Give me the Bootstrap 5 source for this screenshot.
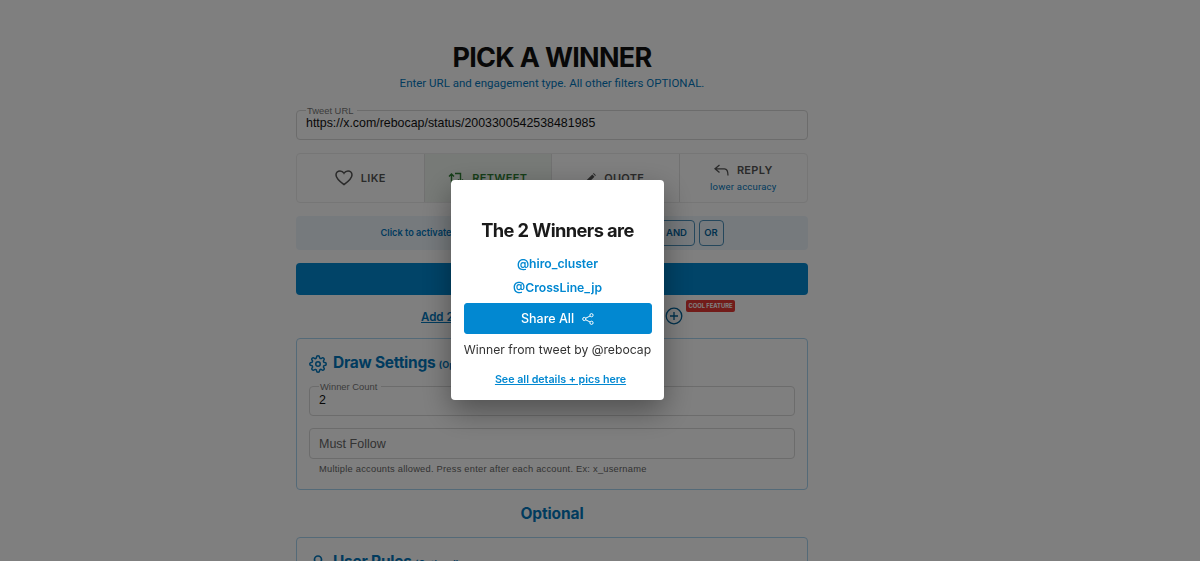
<!DOCTYPE html>
<html lang="en">

<head>
  <meta charset="UTF-8" />
  <meta name="viewport" content="width=device-width, initial-scale=1.0" />
  <title>Pick a Winner</title>
  <link href="https://cdn.jsdelivr.net/npm/bootstrap@5.3.3/dist/css/bootstrap.min.css" rel="stylesheet" />
  <style>
    html, body {
      height: 561px;
      overflow: hidden;
    }

    body {
      background-color: #fff;
      font-family: Inter, sans-serif;
    }

    .page-wrap {
      width: 512px;
      margin-left: 296px;
      padding-top: 42px;
    }

    .page-title {
      font-size: 27px;
      line-height: 32px;
      font-weight: 700;
      letter-spacing: -0.7px;
      color: #111;
      margin: 0;
    }

    .page-sub {
      font-family: Roboto, sans-serif;
      font-size: 11.5px;
      line-height: 14px;
      color: #0277bd;
      margin: 2px 0 20px;
    }

    .out-field {
      border: 1px solid #d8d8d8;
      border-radius: 4px;
      padding: 0 9px;
      height: 30px;
      position: relative;
    }

    .out-field legend {
      float: none;
      width: auto;
      font-family: "Liberation Sans", sans-serif;
      font-size: 9.4px;
      line-height: 1px;
      height: 1px;
      color: #777;
      padding: 0 4px 0 1px;
      margin: 0;
    }

    .out-field input {
      display: block;
      width: 100%;
      border: 0;
      outline: 0;
      padding: 0;
      background: transparent;
      font-family: "Liberation Sans", sans-serif;
      font-size: 12.4px;
      line-height: 25px;
      height: 25px;
      color: #111;
    }

    .out-count input {
      height: 27px;
      line-height: 27px;
    }

    .out-plain {
      display: block;
      width: 100%;
      height: 31px;
      border: 1px solid #d8d8d8;
      border-radius: 4px;
      padding: 0 9px;
      font-family: "Liberation Sans", sans-serif;
      font-size: 12.5px;
      color: #111;
      outline: 0;
    }

    .out-plain::placeholder {
      color: #666;
      opacity: 1;
    }

    .engage-row {
      display: grid;
      grid-template-columns: repeat(4, 1fr);
      height: 50px;
      margin-top: 13px;
      border: 1px solid #ececec;
      border-radius: 4px;
    }

    .engage-cell {
      border-right: 1px solid #e2e2e2;
      font-size: 11px;
      font-weight: 600;
      letter-spacing: 0.3px;
      color: #555;
      line-height: 14px;
    }

    .engage-cell:last-child {
      border-right: 0;
    }

    .engage-on {
      background: #eef4ee;
      color: #2e7d32;
    }

    .engage-note {
      font-family: Roboto, sans-serif;
      font-size: 9.5px;
      font-weight: 400;
      letter-spacing: 0.2px;
      color: #0277bd;
      line-height: 12px;
      margin-top: 4px;
    }

    .filter-bar {
      height: 34px;
      margin-top: 13px;
      background: #edf5fb;
      border-radius: 4px;
    }

    .filter-hint {
      width: 278px;
      font-size: 9.2px;
      font-weight: 600;
      color: #0277bd;
    }

    .op-btn {
      --bs-btn-padding-x: 0;
      --bs-btn-padding-y: 0;
      --bs-btn-font-size: 9.5px;
      --bs-btn-font-weight: 600;
      --bs-btn-color: #01639b;
      --bs-btn-border-color: #4b8fb8;
      --bs-btn-border-radius: 4px;
      height: 26px;
      width: 36px;
    }

    .op-btn + .op-btn {
      width: 25px;
      margin-left: 4px;
    }

    .main-btn {
      height: 32px;
      margin-top: 13px;
      background: #0288d1;
      border-radius: 4px;
    }

    .add-row {
      height: 43px;
      font-size: 11.5px;
      font-weight: 600;
      color: #0277bd;
    }

    .add-link {
      position: absolute;
      left: 125px;
      top: 14px;
      color: #0277bd;
    }

    .add-plus {
      position: absolute;
      left: 369px;
      top: 12px;
    }

    .cool-tag {
      position: absolute;
      left: 390px;
      top: 5px;
      width: 49px;
      height: 12px;
      background: #e53935;
      border-radius: 2px;
      color: #fff;
      font-size: 5.8px;
      font-weight: 700;
      line-height: 12px;
      text-align: center;
      white-space: nowrap;
    }

    .sect-box {
      --bs-card-border-color: #a9d4f0;
      --bs-card-border-radius: 4px;
      --bs-card-inner-border-radius: 3px;
      padding: 12px 12px 0;
    }

    .sect-head {
      gap: 6px;
    }

    .sect-title {
      font-size: 15.5px;
      line-height: 24px;
      font-weight: 700;
      color: #0277bd;
      margin: 0;
      letter-spacing: -0.25px;
    }

    .sect-title small {
      font-size: 9px;
      font-weight: 700;
      letter-spacing: 0;
    }

    .hint-text {
      font-family: "Liberation Sans", sans-serif;
      font-size: 9.3px;
      letter-spacing: 0.24px;
      line-height: 12px;
      color: #666;
      padding: 4px 10px 14px;
    }

    .field-top {
      margin-top: 9px;
    }

    .field-gap {
      margin-top: 12px;
    }

    .opt-head {
      font-size: 15.5px;
      font-weight: 700;
      line-height: 20px;
      letter-spacing: -0.1px;
      color: #0277bd;
      margin: 14px 0 13px;
    }

    .win-backdrop {
      opacity: 0.5;
    }

    .win-modal {
      top: 180px;
      left: 451px;
      width: 213px;
      height: 220px;
      background: #fff;
      border-radius: 4px;
      box-shadow: 0 11px 30px rgba(0, 0, 0, 0.38);
      padding: 36px 12.5px 0;
      z-index: 1060;
    }

    .win-title {
      font-size: 18.3px;
      line-height: 28px;
      font-weight: 700;
      letter-spacing: -0.6px;
      color: #1a1a1a;
      margin: 0 0 8px;
    }

    .win-name {
      display: block;
      font-size: 12.2px;
      line-height: 24px;
      font-weight: 600;
      color: #0288d1;
      text-decoration: none;
    }

    .share-btn {
      --bs-btn-bg: #0288d1;
      --bs-btn-border-color: #0288d1;
      --bs-btn-color: #fff;
      --bs-btn-font-size: 12.5px;
      --bs-btn-font-weight: 500;
      --bs-btn-border-radius: 3px;
      --bs-btn-padding-y: 0;
      height: 31px;
      margin-top: 3px;
      padding-top: 1px;
    }

    .win-from {
      font-size: 12.2px;
      line-height: 16px;
      color: #333;
      margin: 8px 0 0;
      white-space: nowrap;
    }

    .win-more {
      display: block;
      margin-top: 15px;
      padding-left: 6px;
      font-size: 10.7px;
      line-height: 14px;
      font-weight: 600;
      color: #0288d1;
    }
  </style>
</head>

<body>
  <div class="page-wrap">
    <h1 class="page-title text-center">PICK A WINNER</h1>
    <p class="page-sub text-center">Enter URL and engagement type. All other filters OPTIONAL.</p>

    <fieldset class="out-field">
      <legend>Tweet URL</legend>
      <input type="text" value="https://x.com/rebocap/status/2003300542538481985" />
    </fieldset>

    <div class="engage-row">
      <div class="engage-cell d-flex align-items-center justify-content-center gap-2">
        <svg width="18" height="16" viewBox="0 0 20 18" fill="none" stroke="#555" stroke-width="1.7"><path d="M10 16.500C4 12 1 9 1 5.600 1 3 3 1 5.500 1 7.300 1 9 2 10 3.600 11 2 12.700 1 14.500 1 17 1 19 3 19 5.600 19 9 16 12 10 16.500Z"/></svg>
        <span>LIKE</span>
      </div>
      <div class="engage-cell engage-on d-flex align-items-center justify-content-center gap-2">
        <svg width="16" height="12" viewBox="0 0 16 12" fill="none" stroke="#2e7d32" stroke-width="1.4"><path d="M3.500 11V2M1 4.500 3.500 2 6 4.500M7 1.500h5.500V10M10 7.500 12.500 10 15 7.500"/></svg>
        <span>RETWEET</span>
      </div>
      <div class="engage-cell d-flex align-items-center justify-content-center gap-2">
        <svg width="10" height="10" viewBox="0 0 10 10" fill="#555"><path d="M0 10V7.800L6.300 1.500 8.500 3.700 2.200 10ZM7 .8 7.700 .1 9.900 2.300 9.200 3Z"/></svg>
        <span>QUOTE</span>
      </div>
      <div class="engage-cell d-flex flex-column align-items-center justify-content-center">
        <div class="d-flex align-items-center gap-2">
          <svg width="15" height="12" viewBox="0 0 15 12" fill="none" stroke="#555" stroke-width="1.3"><path d="M5.500 1 1 4.800 5.500 8.600M1 4.800H10.500C12.800 4.800 14 6.500 14 11.500"/></svg>
          <span>REPLY</span>
        </div>
        <div class="engage-note">lower accuracy</div>
      </div>
    </div>

    <div class="filter-bar d-flex align-items-center justify-content-center">
      <div class="filter-hint">Click to activate</div>
      <button type="button" class="btn op-btn">AND</button>
      <button type="button" class="btn op-btn">OR</button>
    </div>

    <div class="main-btn"></div>

    <div class="add-row position-relative">
      <a class="add-link" href="#">Add 2</a>
      <svg class="add-plus" width="18" height="18" viewBox="0 0 18 18" fill="none" stroke="#01639b" stroke-width="1.3"><circle cx="9" cy="9" r="7.800"/><path d="M9 5v8M5 9h8"/></svg>
      <span class="cool-tag">COOL FEATURE</span>
    </div>

    <div class="card sect-box">
      <div class="d-flex align-items-center sect-head">
        <svg width="18" height="18" viewBox="0 0 24 24" fill="none" stroke="#0277bd" stroke-width="2"><circle cx="12" cy="12" r="3"/><path d="M19.400 15a1.650 1.650 0 0 0 .33 1.820l.06.06a2 2 0 0 1 0 2.830 2 2 0 0 1-2.830 0l-.06-.06a1.650 1.650 0 0 0-1.820-.33 1.650 1.650 0 0 0-1 1.510V21a2 2 0 0 1-2 2 2 2 0 0 1-2-2v-.09A1.650 1.650 0 0 0 9 19.400a1.650 1.650 0 0 0-1.820.33l-.06.06a2 2 0 0 1-2.830 0 2 2 0 0 1 0-2.830l.06-.06a1.650 1.650 0 0 0 .33-1.820 1.650 1.650 0 0 0-1.510-1H3a2 2 0 0 1-2-2 2 2 0 0 1 2-2h.09A1.650 1.650 0 0 0 4.600 9a1.650 1.650 0 0 0-.33-1.820l-.06-.06a2 2 0 0 1 0-2.830 2 2 0 0 1 2.830 0l.06.06a1.650 1.650 0 0 0 1.820.33H9a1.650 1.650 0 0 0 1-1.510V3a2 2 0 0 1 2-2 2 2 0 0 1 2 2v.09a1.650 1.650 0 0 0 1 1.510 1.650 1.650 0 0 0 1.820-.33l.06-.06a2 2 0 0 1 2.830 0 2 2 0 0 1 0 2.830l-.06.06a1.650 1.650 0 0 0-.33 1.820V9a1.650 1.650 0 0 0 1.510 1H21a2 2 0 0 1 2 2 2 2 0 0 1-2 2h-.09a1.650 1.650 0 0 0-1.510 1z"/></svg>
        <h2 class="sect-title">Draw Settings <small>(Optional)</small></h2>
      </div>
      <fieldset class="out-field out-count field-top">
        <legend>Winner Count</legend>
        <input type="text" value="2" />
      </fieldset>
      <input type="text" class="out-plain field-gap" placeholder="Must Follow" />
      <div class="hint-text">Multiple accounts allowed. Press enter after each account. Ex: x_username</div>
    </div>

    <h2 class="opt-head text-center">Optional</h2>

    <div class="card sect-box">
      <div class="d-flex align-items-center sect-head">
        <svg width="18" height="18" viewBox="0 0 18 18" fill="none" stroke="#0277bd" stroke-width="1.700"><circle cx="9" cy="5.500" r="3.500"/><path d="M2 17c0-4 3-6 7-6s7 2 7 6"/></svg>
        <h2 class="sect-title">User Rules <small>(Optional)</small></h2>
      </div>
    </div>
  </div>

  <div class="modal-backdrop show win-backdrop"></div>
  <div class="position-fixed win-modal text-center">
    <h2 class="win-title">The 2 Winners are</h2>
    <a class="win-name" href="#">@hiro_cluster</a>
    <a class="win-name" href="#">@CrossLine_jp</a>
    <button type="button" class="btn share-btn w-100 d-flex align-items-center justify-content-center gap-2">
      <span>Share All</span>
      <svg width="12" height="12" viewBox="0 0 12 12" fill="none" stroke="#fff" stroke-width="1"><circle cx="9.500" cy="2.200" r="1.600"/><circle cx="2.300" cy="6" r="1.600"/><circle cx="9.500" cy="9.800" r="1.600"/><path d="M3.700 5.200 8.100 3M3.700 6.800 8.100 9"/></svg>
    </button>
    <p class="win-from">Winner from tweet by @rebocap</p>
    <a class="win-more" href="#">See all details + pics here</a>
  </div>
</body>
</html>
